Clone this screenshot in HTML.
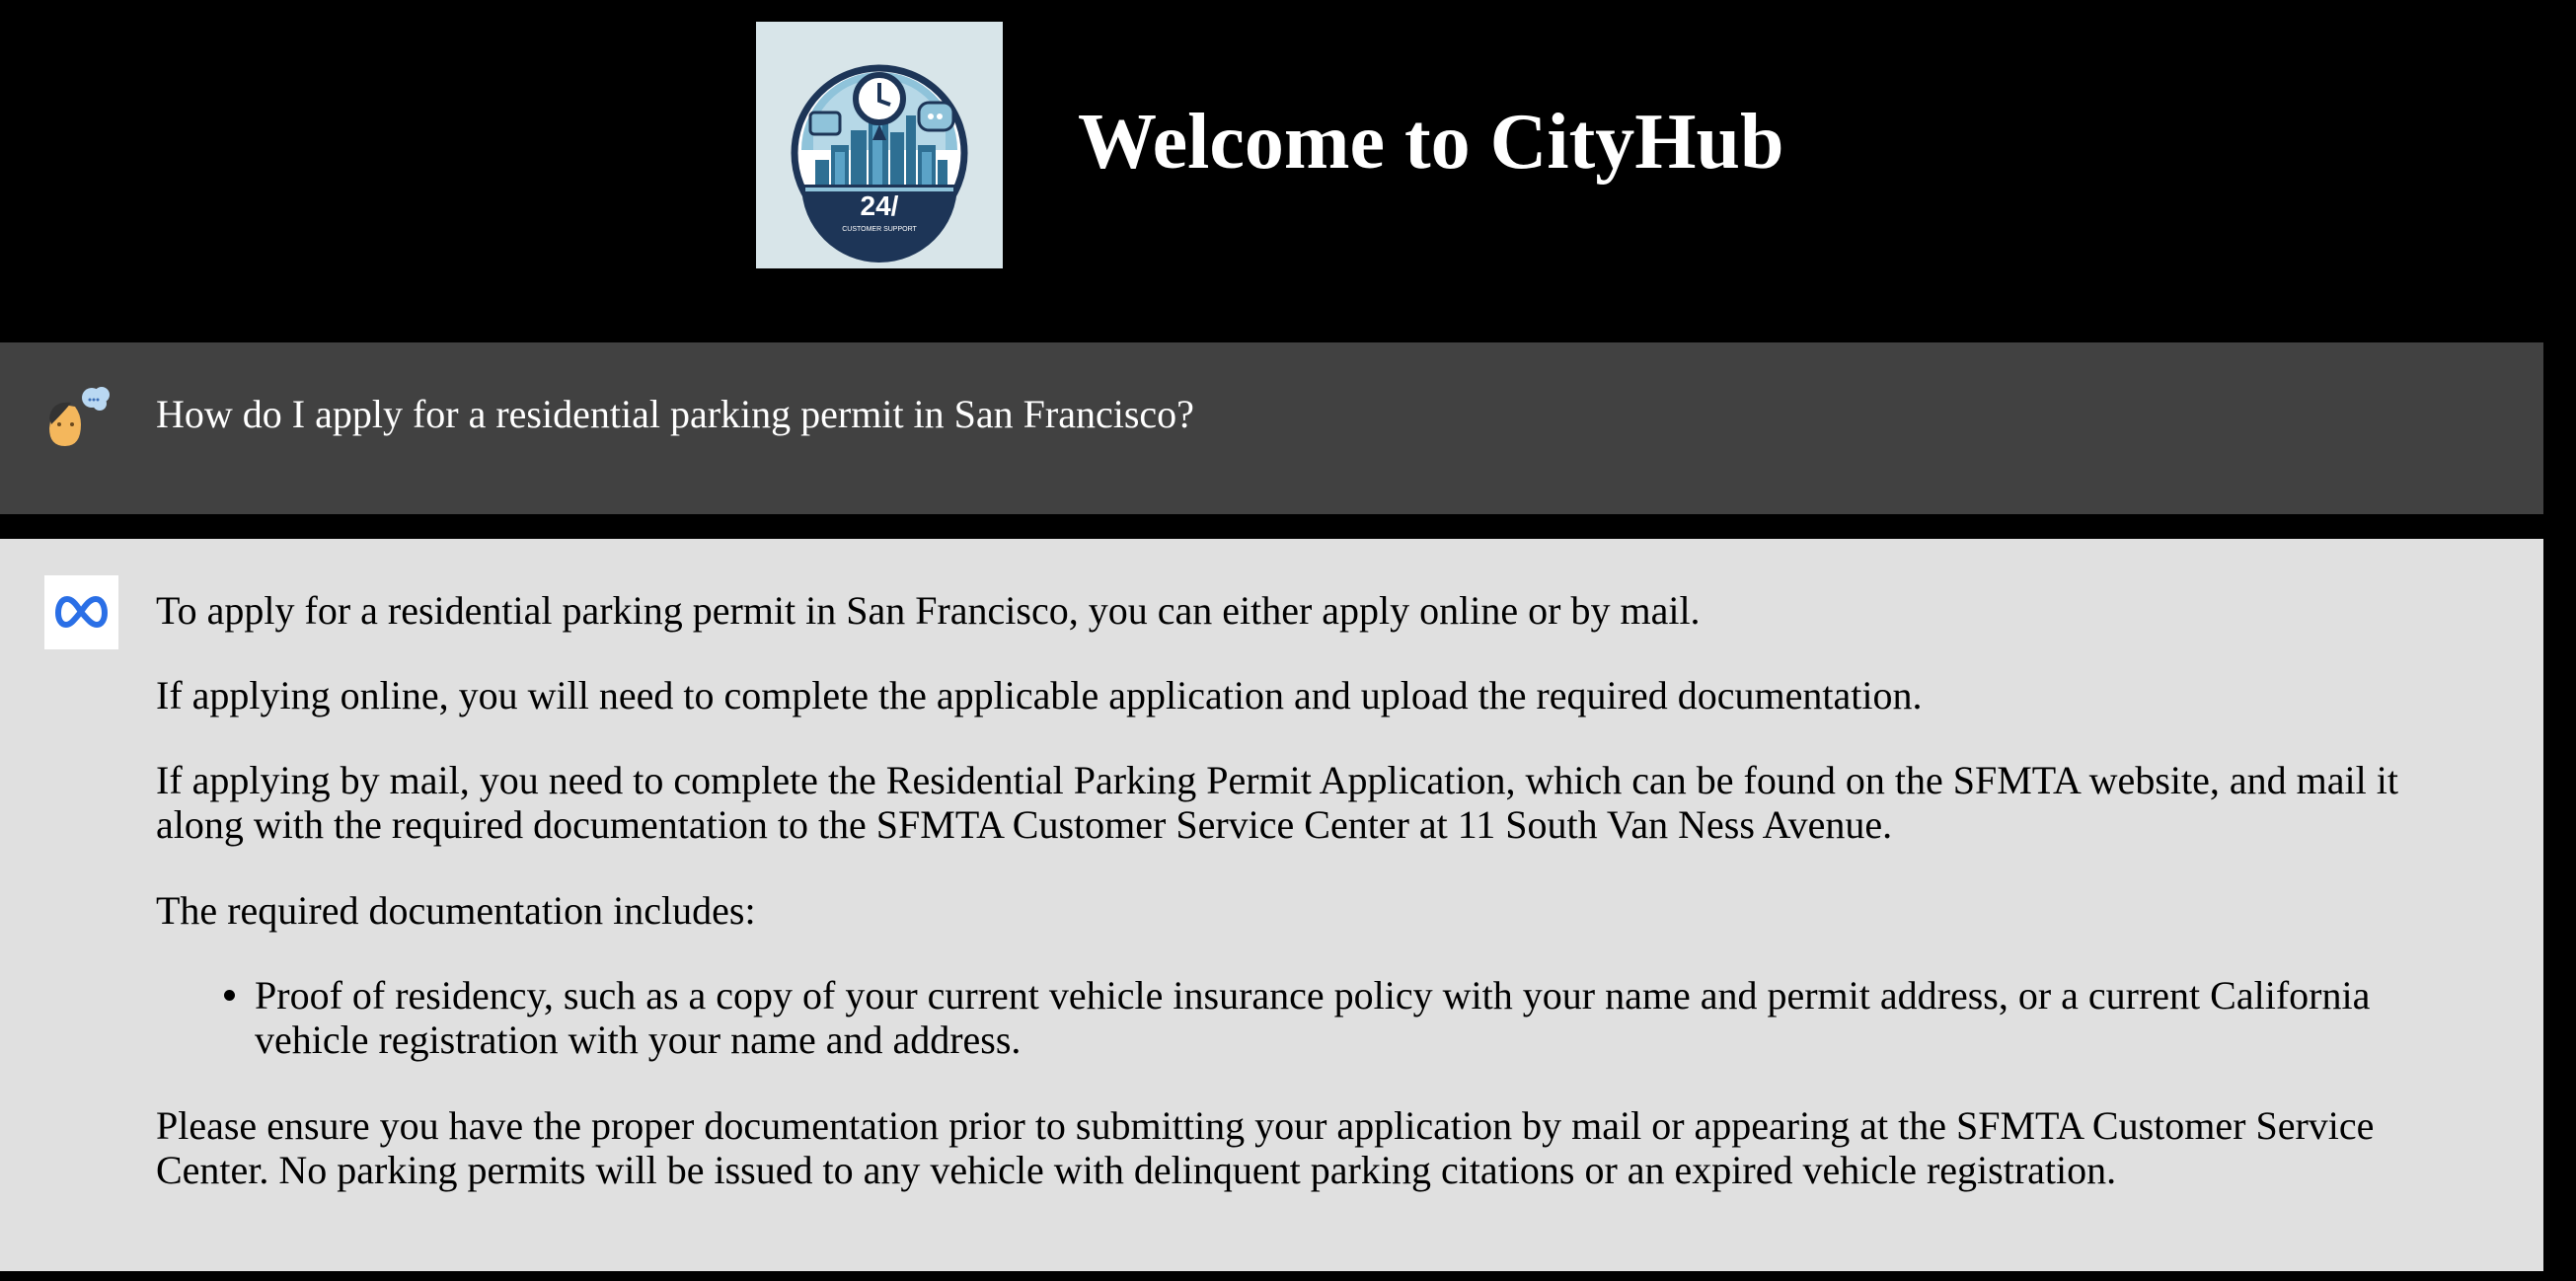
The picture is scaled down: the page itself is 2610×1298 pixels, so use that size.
<!DOCTYPE html>
<html><head><meta charset="utf-8"><style>
*{margin:0;padding:0;box-sizing:border-box}
body{width:2610px;height:1298px;background:#000;font-family:"Liberation Serif",serif;overflow:hidden;position:relative}
.abs{position:absolute}
h1{position:absolute;left:1092px;top:104px;font-size:80px;font-weight:bold;color:#fff;white-space:nowrap;line-height:1}
.q{left:0;top:347px;width:2577px;height:174px;background:#414141}
.a{left:0;top:546px;width:2577px;height:742px;background:#e0e0e0}
.txt{position:absolute;left:158px;font-size:40px;line-height:45px;white-space:nowrap;color:#000}
</style></head><body>
<div class="abs" style="left:766px;top:22px;width:250px;height:250px;background:#d8e5e9">
<svg width="250" height="250" viewBox="0 0 250 250">
<circle cx="125" cy="133" r="86" fill="#fff" stroke="#1d3557" stroke-width="7"/>
<path d="M46 130 A79 79 0 0 1 204 130 Z" fill="#8fc3da"/>
<path d="M58 108 A70 70 0 0 1 192 108 L192 150 L58 150Z" fill="#fff" opacity=".35"/>
<g fill="#2e6f93"><rect x="60" y="140" width="14" height="30"/><rect x="76" y="125" width="18" height="45"/><rect x="96" y="110" width="16" height="60"/><rect x="114" y="95" width="20" height="75"/><rect x="136" y="112" width="14" height="58"/><rect x="152" y="95" width="10" height="75"/><rect x="164" y="125" width="18" height="45"/><rect x="184" y="140" width="10" height="30"/></g>
<g fill="#5ba3c7"><rect x="80" y="132" width="10" height="38"/><rect x="118" y="105" width="10" height="65"/><rect x="168" y="132" width="10" height="38"/></g>
<path d="M46 165 L204 165 A79 79 0 0 1 46 165Z" fill="#1d3557"/>
<rect x="50" y="168" width="150" height="4" fill="#8fc3da"/>
<circle cx="125" cy="78" r="24" fill="#fff" stroke="#1d3557" stroke-width="6"/>
<path d="M125 62 L125 80 L136 84" stroke="#1d3557" stroke-width="4" fill="none"/>
<path d="M125 104 L118 120 L132 120Z" fill="#1d3557"/>
<rect x="55" y="92" width="30" height="22" rx="4" fill="#8fc3da" stroke="#1d3557" stroke-width="3"/>
<rect x="165" y="82" width="35" height="28" rx="10" fill="#8fc3da" stroke="#1d3557" stroke-width="3"/>
<circle cx="177" cy="96" r="3" fill="#fff"/><circle cx="186" cy="96" r="3" fill="#fff"/>
<text x="125" y="196" font-family="Liberation Sans,sans-serif" font-weight="bold" font-size="28" fill="#fff" text-anchor="middle">24/</text>
<text x="125" y="212" font-family="Liberation Sans,sans-serif" font-size="7" fill="#fff" text-anchor="middle">CUSTOMER SUPPORT</text>
</svg></div>
<h1>Welcome to CityHub</h1>

<div class="abs q"></div>
<svg class="abs" style="left:46px;top:390px" width="70" height="64" viewBox="0 0 70 64">
<path d="M6 30 Q6 22 18 20 L30 22 Q36 30 36 40 Q36 62 20 62 Q4 62 4 44Z" fill="#f4b75c"/>
<path d="M4 34 Q6 16 26 18 Q20 26 6 40Z" fill="#333"/>
<circle cx="14" cy="40" r="2" fill="#6b4a1e"/><circle cx="27" cy="40" r="2" fill="#6b4a1e"/>
<circle cx="47" cy="13" r="10" fill="#b9d8f2"/><circle cx="57" cy="10" r="8" fill="#b9d8f2"/><circle cx="55" cy="19" r="7" fill="#b9d8f2"/>
<circle cx="45" cy="15" r="1.5" fill="#3d6fb6"/><circle cx="49" cy="15" r="1.5" fill="#3d6fb6"/><circle cx="53" cy="15" r="1.5" fill="#3d6fb6"/>
</svg>
<div class="txt" style="top:397px;color:#fff">How do I apply for a residential parking permit in San Francisco?</div>

<div class="abs a"></div>
<div class="abs" style="left:45px;top:583px;width:75px;height:75px;background:#fff">
<svg width="75" height="75" viewBox="0 0 75 75"><path d="M37 37 C31 27 27 24 23 24 C17 24 14 31 14 38 C14 45 17 50 22 50 C27 50 31 44 37 37 C43 28 47 24 52 24 C58 24 61 31 61 38 C61 45 58 50 53 50 C48 50 44 45 37 37" fill="none" stroke="#2a6fe6" stroke-width="6"/></svg>
</div>
<div class="txt" style="top:596px">To apply for a residential parking permit in San Francisco, you can either apply online or by mail.</div>
<div class="txt" style="top:682px">If applying online, you will need to complete the applicable application and upload the required documentation.</div>
<div class="txt" style="top:768px">If applying by mail, you need to complete the Residential Parking Permit Application, which can be found on the SFMTA website, and mail it<br>along with the required documentation to the SFMTA Customer Service Center at 11 South Van Ness Avenue.</div>
<div class="txt" style="top:900px">The required documentation includes:</div>
<div class="abs" style="left:227px;top:1003px;width:11px;height:11px;border-radius:50%;background:#000"></div>
<div class="txt" style="top:986px;left:258px">Proof of residency, such as a copy of your current vehicle insurance policy with your name and permit address, or a current California<br>vehicle registration with your name and address.</div>
<div class="txt" style="top:1118px">Please ensure you have the proper documentation prior to submitting your application by mail or appearing at the SFMTA Customer Service<br>Center. No parking permits will be issued to any vehicle with delinquent parking citations or an expired vehicle registration.</div>
</body></html>
